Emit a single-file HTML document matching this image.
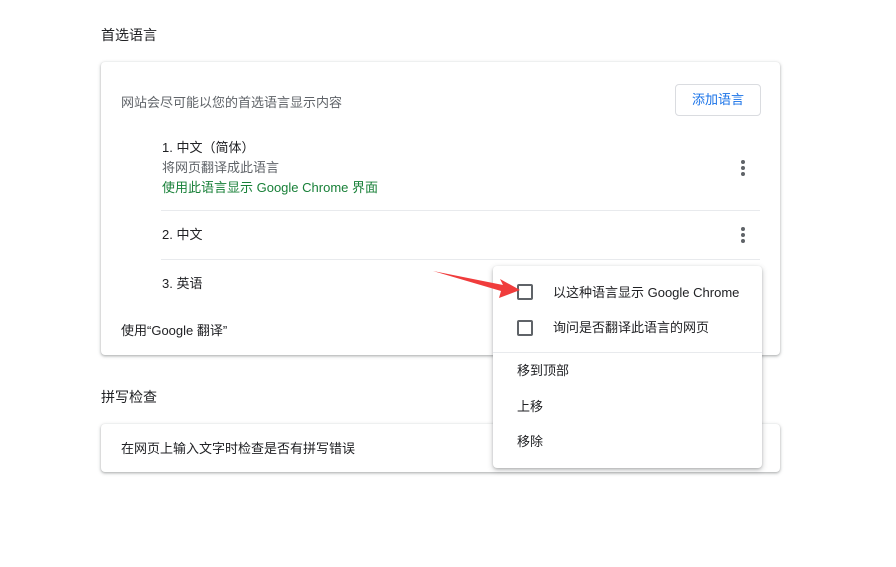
<!DOCTYPE html>
<html><head><meta charset="utf-8"><style>
body{margin:0;width:896px;height:567px;background:#fff;font-family:"Liberation Sans","Noto Sans CJK SC",sans-serif;font-size:13px;color:#202124;position:relative;overflow:hidden}
.a{position:absolute;white-space:nowrap;margin-top:-2px}
.card{position:absolute;left:101px;width:679px;background:#fff;border-radius:4px;box-shadow:0 1px 2px rgba(60,64,67,.3),0 1px 3px 1px rgba(60,64,67,.15)}
.g{color:#5f6368}
.dots{position:absolute;width:4px}
.dots i{display:block;width:4px;height:4px;border-radius:2px;background:#5f6368;margin-bottom:2px}
.hr{position:absolute;height:1px;background:#e8eaed}
.cb{position:absolute;width:12px;height:12px;border:2px solid #5f6368;border-radius:2px}
</style></head><body>
<div class="a" style="left:101px;top:27px;font-size:14px">首选语言</div>
<div class="card" style="top:62px;height:293px"></div>
<div class="a g" style="left:121px;top:94px">网站会尽可能以您的首选语言显示内容</div>
<div class="a" style="left:675px;top:86px;width:84px;height:30px;border:1px solid #dadce0;border-radius:4px;color:#1a73e8;text-align:center;line-height:30px">添加语言</div>
<div class="a" style="left:162px;top:139px">1. 中文（简体）</div>
<div class="a g" style="left:162px;top:159px">将网页翻译成此语言</div>
<div class="a" style="left:162px;top:179px;color:#188038">使用此语言显示 Google Chrome 界面</div>
<div class="dots" style="left:741px;top:160px"><i></i><i></i><i></i></div>
<div class="hr" style="left:161px;top:210px;width:599px"></div>
<div class="a" style="left:162px;top:226px">2. 中文</div>
<div class="dots" style="left:741px;top:227px"><i></i><i></i><i></i></div>
<div class="hr" style="left:161px;top:259px;width:599px"></div>
<div class="a" style="left:162px;top:275px">3. 英语</div>
<div class="a" style="left:121px;top:322px">使用“Google 翻译”</div>
<div class="a" style="left:101px;top:389px;font-size:14px">拼写检查</div>
<div class="card" style="top:424px;height:48px"></div>
<div class="a" style="left:121px;top:440px">在网页上输入文字时检查是否有拼写错误</div>
<div style="position:absolute;left:493px;top:266px;width:269px;height:202px;background:#fff;border-radius:4px;box-shadow:0 2px 6px rgba(60,64,67,.3),0 1px 2px rgba(60,64,67,.2)"></div>
<div class="cb" style="left:517px;top:284px"></div>
<div class="a" style="left:553px;top:284px">以这种语言显示 Google Chrome</div>
<div class="cb" style="left:517px;top:320px"></div>
<div class="a" style="left:553px;top:319px">询问是否翻译此语言的网页</div>
<div class="hr" style="left:493px;top:352px;width:269px"></div>
<div class="a" style="left:517px;top:362px">移到顶部</div>
<div class="a" style="left:517px;top:398px">上移</div>
<div class="a" style="left:517px;top:433px">移除</div>
<svg style="position:absolute;left:0;top:0" width="896" height="567"><path d="M433 271 L503 285 L500 279 L520 290 L499 298 L501 291 Z" fill="#f03c3c"/></svg>
</body></html>
